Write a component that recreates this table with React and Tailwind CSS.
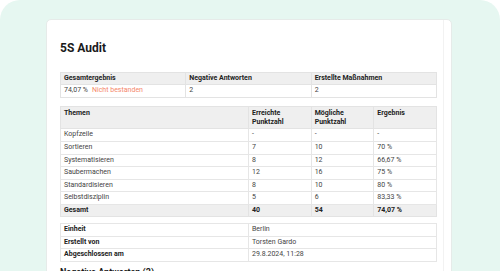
export default function App() {
  const font = { fontFamily: "Roboto, 'Liberation Sans', sans-serif" };
  const themen = [
    ["Kopfzeile", "-", "-", "-"],
    ["Sortieren", "7", "10", "70 %"],
    ["Systematisieren", "8", "12", "66,67 %"],
    ["Saubermachen", "12", "16", "75 %"],
    ["Standardisieren", "8", "10", "80 %"],
    ["Selbstdisziplin", "5", "6", "83,33 %"],
  ];
  const info = [
    ["Einheit", "Berlin"],
    ["Erstellt von", "Torsten Gardo"],
    ["Abgeschlossen am", "29.8.2024, 11:28"],
  ];
  return (
    <div className="w-[500px] h-[271px] bg-white overflow-hidden" style={font}>
      <div className="h-[300px] rounded-[20px] bg-[#e6f7f1] pt-[19px] pl-[46px] pr-[48px]">
        <div className="h-[290px] bg-white rounded-[5px] border border-[#e6ebe9] flex">
          <div className="flex-1 pl-[13px] pr-[6px] pt-[20px]">
            <h1 className="text-[12px] leading-[16px] font-bold text-[#1a1a1a]">5S Audit</h1>

            <table className="mt-[16px] w-full table-fixed border-collapse text-[7px] leading-[11.4px]">
              <thead>
                <tr className="bg-[#efefef]">
                  <th className="border border-[#e3e3e3] px-[3px] text-left font-bold text-[#222]">Gesamtergebnis</th>
                  <th className="border border-[#e3e3e3] px-[3px] text-left font-bold text-[#222]">Negative Antworten</th>
                  <th className="border border-[#e3e3e3] px-[3px] text-left font-bold text-[#222]">Erstellte Maßnahmen</th>
                </tr>
              </thead>
              <tbody>
                <tr>
                  <td className="border border-[#e3e3e3] px-[3px] text-[#444]">
                    74,07 %<span className="ml-[4px] text-[#f5876b]">Nicht bestanden</span>
                  </td>
                  <td className="border border-[#e3e3e3] px-[3px] text-[#444]">2</td>
                  <td className="border border-[#e3e3e3] px-[3px] text-[#444]">2</td>
                </tr>
              </tbody>
            </table>

            <table className="mt-[8px] w-full table-fixed border-collapse text-[7px] leading-[11.6px]">
              <colgroup>
                <col className="w-1/2" />
                <col className="w-1/6" />
                <col className="w-1/6" />
                <col className="w-1/6" />
              </colgroup>
              <thead>
                <tr className="bg-[#efefef]">
                  <th className="border border-[#e3e3e3] px-[3px] pt-[2.5px] pb-[1px] leading-[9px] align-top text-left font-bold text-[#222]">Themen</th>
                  <th className="border border-[#e3e3e3] px-[3px] pt-[2.5px] pb-[1px] leading-[9px] align-top text-left font-bold text-[#222]">Erreichte<br />Punktzahl</th>
                  <th className="border border-[#e3e3e3] px-[3px] pt-[2.5px] pb-[1px] leading-[9px] align-top text-left font-bold text-[#222]">Mögliche<br />Punktzahl</th>
                  <th className="border border-[#e3e3e3] px-[3px] pt-[2.5px] pb-[1px] leading-[9px] align-top text-left font-bold text-[#222]">Ergebnis</th>
                </tr>
              </thead>
              <tbody>
                {themen.map((r) => (
                  <tr key={r[0]}>
                    {r.map((c, i) => (
                      <td key={i} className="border border-[#e6e6e6] px-[3px] text-[#444]">{c}</td>
                    ))}
                  </tr>
                ))}
                <tr className="bg-[#efefef]">
                  <td className="border border-[#e3e3e3] px-[3px] font-bold text-[#222]">Gesamt</td>
                  <td className="border border-[#e3e3e3] px-[3px] font-bold text-[#222]">40</td>
                  <td className="border border-[#e3e3e3] px-[3px] font-bold text-[#222]">54</td>
                  <td className="border border-[#e3e3e3] px-[3px] font-bold text-[#222]">74,07 %</td>
                </tr>
              </tbody>
            </table>

            <table className="mt-[6px] w-full table-fixed border-collapse text-[7px] leading-[11.4px]">
              <tbody>
                {info.map((r) => (
                  <tr key={r[0]}>
                    <td className="w-1/2 border border-[#e6e6e6] px-[3px] font-bold text-[#222]">{r[0]}</td>
                    <td className="w-1/2 border border-[#e6e6e6] px-[3px] text-[#444]">{r[1]}</td>
                  </tr>
                ))}
              </tbody>
            </table>

            <h2 className="mt-[4px] text-[9px] leading-[12px] font-bold text-[#1a1a1a]">Negative Antworten (2)</h2>
          </div>
          <div className="w-[8px] border-l border-[#f2f2f2]"></div>
        </div>
      </div>
    </div>
  );
}
